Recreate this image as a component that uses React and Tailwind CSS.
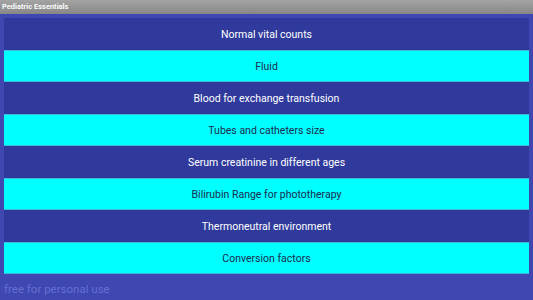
const items = [
  'Normal vital counts',
  'Fluid',
  'Blood for exchange transfusion',
  'Tubes and catheters size',
  'Serum creatinine in different ages',
  'Bilirubin Range for phototherapy',
  'Thermoneutral environment',
  'Conversion factors',
];

export default function App() {
  return (
    <div className="flex h-[300px] w-[533px] flex-col overflow-hidden bg-[#3f47b0] font-['Roboto',sans-serif]">
      <div className="flex h-[14px] items-center bg-gradient-to-b from-[#a4a4a4] to-[#878787] px-[2px] text-[7.5px] font-semibold text-white">
        Pediatric Essentials
      </div>
      <div className="flex flex-1 flex-col pl-[4px] pr-[4px] pt-[4px]">
        {items.map((item, i) => (
          <div
            key={item}
            className={
              i % 2 === 0
                ? 'flex h-[32px] items-center justify-center bg-[#2f3a9c] pt-[1px] text-[10.5px] text-white'
                : 'flex h-[32px] items-center justify-center border-y border-[#3fb8d8] bg-[#00ffff] pt-[1px] text-[10.5px] text-[#1d2b4f]'
            }
          >
            {item}
          </div>
        ))}
        <div className="mt-[7px] text-[11.5px] text-[#6470d0]">free for personal use</div>
      </div>
    </div>
  );
}
